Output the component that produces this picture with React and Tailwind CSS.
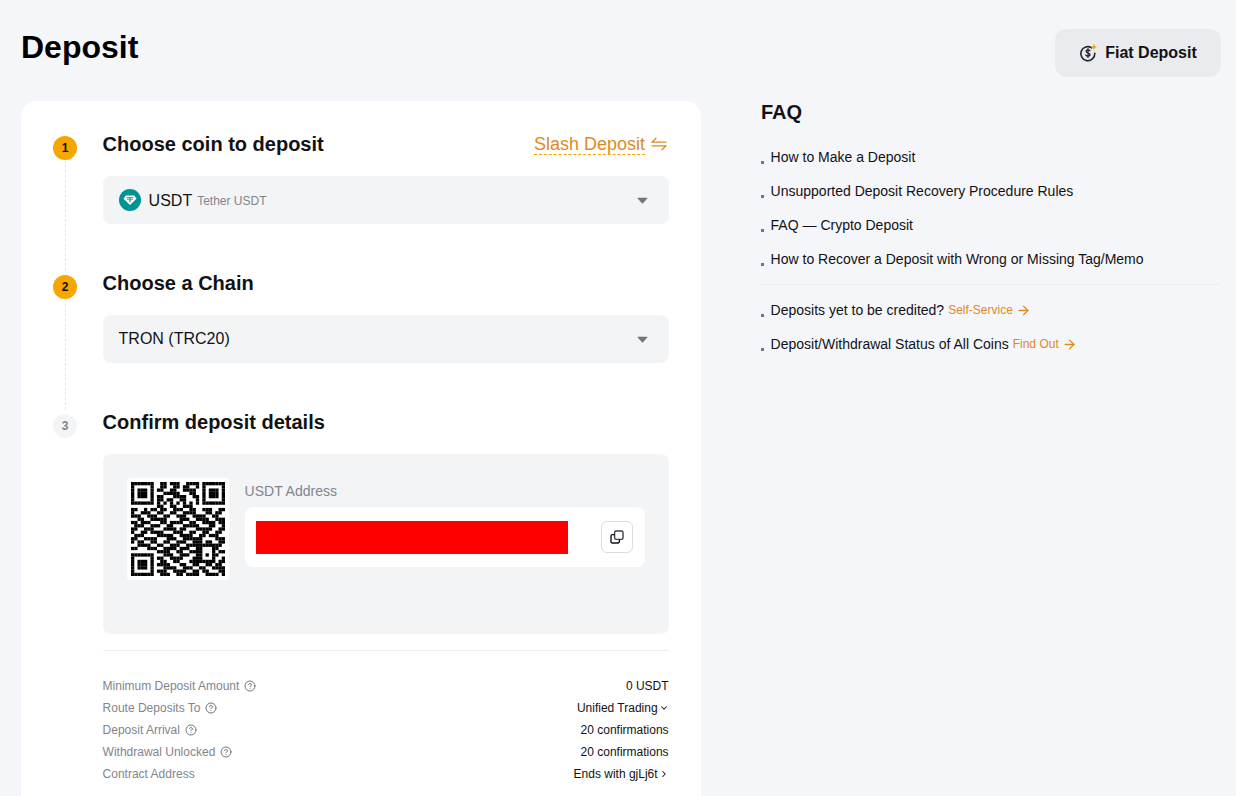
import { ChevronDown, ChevronRight, ArrowRight, CircleHelp } from "lucide-react";

const finder = ["1111111", "1000001", "1011101", "1011101", "1011101", "1000001", "1111111"];
const topMid = [
  "0110111001111",
  "0110011011001",
  "1100110011110",
  "0011111000110",
  "1100011110011",
  "1101100110001",
  "1010101010101",
];
const middle = [
  "00000000110011001110000000000",
  "11001011011001110011001110011",
  "10011100110011001111000110110",
  "11100111001100111001111001100",
  "00110011111000011100111100111",
  "11011100011011110011001111011",
  "01110011100110001111100011001",
  "11001110001111011000111110011",
  "10011011110001110011001100110",
  "01110000111110011110011011100",
  "11001111000111001111110000111",
  "10110011001100111001110110011",
  "00111100110011100111111111110",
  "11000111001111011100110001100",
  "00000000111100110011110001011",
];
const bottom = [
  "001110011100110101100",
  "110011110001110001001",
  "011001100011111111011",
  "111100011001100110110",
  "001111001110011001111",
  "111001111001101100011",
  "011100110111100111101",
];
const qrRows = [
  ...finder.map((f, i) => f + "0" + topMid[i] + "0" + f),
  ...middle,
  ...finder.map((f, i) => f + "0" + bottom[i]),
];

function QrCode() {
  return (
    <div className="w-[102px] h-[102px] shrink-0 bg-white rounded p-1 flex items-center justify-center">
      <svg width="94" height="94" viewBox="0 0 29 29">
        {qrRows.map((row, y) =>
          row.split("").map((c, x) =>
            c === "1" ? <rect key={x + "-" + y} x={x} y={y} width="1.02" height="1.02" fill="#000" /> : null
          )
        )}
      </svg>
    </div>
  );
}

function TetherIcon() {
  return (
    <svg width="22" height="22" viewBox="0 0 22 22" className="shrink-0">
      <circle cx="11" cy="11" r="11" fill="#009393" />
      <path d="M6.8 6.5h8.4l2.3 3.2-6.5 6.3-6.5-6.3z" fill="#fff" />
      <path d="M7.6 8.8h6.8M11 8.8v4.4" stroke="#009393" strokeWidth="1.1" fill="none" />
      <path d="M8 10.4c1.8.5 4.2.5 6 0" stroke="#009393" strokeWidth=".7" fill="none" />
    </svg>
  );
}

function FiatIcon() {
  return (
    <svg width="18" height="18" viewBox="0 0 18 18" fill="none" className="shrink-0">
      <path d="M12.6 3.8A7 7 0 1 0 15.8 9.4" stroke="#1f2329" strokeWidth="1.6" strokeLinecap="round" />
      <path d="M10.9 6.7c-.4-.6-1.1-.9-2-.9-1.1 0-1.9.6-1.9 1.5 0 2 4 1.1 4 3.2 0 .9-.9 1.6-2.1 1.6-.9 0-1.7-.4-2.1-1M9 4.6v8.8" stroke="#1f2329" strokeWidth="1.3" strokeLinecap="round" />
      <path d="M15 0l.9 2.1 2.1.9-2.1.9-.9 2.1-.9-2.1-2.1-.9 2.1-.9z" fill="#f7a600" />
    </svg>
  );
}

function Caret() {
  return (
    <svg width="11" height="7" viewBox="0 0 12 8" className="shrink-0 mr-[1px]">
      <path d="M1 .8h10a.6.6 0 0 1 .5 1L6.6 7.2a.8.8 0 0 1-1.2 0L.5 1.8A.6.6 0 0 1 1 .8z" fill="#71757f" />
    </svg>
  );
}

function SelectBox({ children }) {
  return (
    <div className="h-12 bg-[#f3f4f6] rounded-lg mt-5 pl-4 pr-[20px] flex items-center justify-between">
      <div className="flex items-center">{children}</div>
      <Caret />
    </div>
  );
}

function Step({ num, active, last, title, right, children, bodyClass }) {
  return (
    <div className="flex">
      <div className="w-6 mr-[25.6px] flex flex-col items-center shrink-0">
        <div
          className={
            "w-6 h-6 mt-1 rounded-full flex items-center justify-center text-xs font-bold shrink-0 " +
            (active ? "bg-[#f7a600] text-[#121214]" : "bg-[#f3f4f6] text-[#81858c]")
          }
        >
          {num}
        </div>
        {!last && <div className="flex-1 border-l border-dashed border-[#e5e7eb]" />}
      </div>
      <div className={"flex-1 min-w-0 " + (bodyClass || "")}>
        <div className="h-6 flex items-center justify-between">
          <h2 className="text-xl leading-6 font-bold text-[#121214]">{title}</h2>
          {right}
        </div>
        {children}
      </div>
    </div>
  );
}

function InfoRow({ label, help, children }) {
  return (
    <div className="h-[22px] flex items-center justify-between text-xs pr-[0.4px]">
      <div className="flex items-center text-[#81858c]">
        {label}
        {help && <CircleHelp size={12} strokeWidth={2} className="ml-[5px] text-[#71757f]" />}
      </div>
      <div className="flex items-center text-[#121214]">{children}</div>
    </div>
  );
}

function FaqItem({ children }) {
  return (
    <div className="h-[34px] flex items-center text-sm text-[#121214]">
      <span className="w-[3px] h-[3px] bg-[#71757f] mt-[10px] mr-[6.6px] shrink-0" />
      {children}
    </div>
  );
}

function OrangeLink({ children }) {
  return (
    <span className="ml-1 flex items-center text-xs text-[#e08a1c]">
      {children}
      <ArrowRight size={15} strokeWidth={2.2} className="ml-[3px]" />
    </span>
  );
}

export default function App() {
  return (
    <div className="h-[796px] overflow-hidden bg-[#f5f6fa] font-['Liberation_Sans',Arial,sans-serif] pl-[21px] pr-[15px]">
      <header className="flex justify-between items-start h-[101px]">
        <h1 className="text-[32px] leading-10 font-bold text-black mt-[27px]">Deposit</h1>
        <button className="mt-[29px] w-[166px] h-12 bg-[#e9ebef] rounded-xl flex items-center justify-center gap-2 text-base font-bold text-[#121214]">
          <FiatIcon />
          Fiat Deposit
        </button>
      </header>

      <div className="flex items-start">
        <main className="w-[680px] shrink-0 bg-white rounded-2xl pl-8 pr-8 pt-[31px] pb-10">
          <Step
            num="1"
            active
            title="Choose coin to deposit"
            bodyClass="pb-[47px]"
            right={
              <span className="flex items-center text-lg text-[#e08a1c] pr-[2px]">
                <span className="border-b border-dashed border-[#f7a600] leading-[20px] pt-px">Slash Deposit</span>
                <svg width="16" height="14" viewBox="0 0 16 14" fill="none" className="ml-[6px]">
                  <path d="M1 5.2h14M1 5.2 5 1.2M15 8.8H1M15 8.8l-4 4" stroke="#e08a1c" strokeWidth="1.3" strokeLinecap="round" />
                </svg>
              </span>
            }
          >
            <SelectBox>
              <TetherIcon />
              <span className="ml-2 text-base text-[#121214] pt-px">USDT</span>
              <span className="ml-[5px] text-xs text-[#81858c] pt-px">Tether USDT</span>
            </SelectBox>
          </Step>

          <Step num="2" active title="Choose a Chain" bodyClass="pb-[47px]">
            <SelectBox>
              <span className="text-base text-[#121214]">TRON (TRC20)</span>
            </SelectBox>
          </Step>

          <Step num="3" last title="Confirm deposit details">
            <div className="h-[180px] bg-[#f3f4f6] rounded-lg mt-5 pl-6 pr-6 pt-6 flex items-start">
              <QrCode />
              <div className="flex-1 ml-4">
                <div className="text-sm leading-[18px] text-[#81858c] mt-1">USDT Address</div>
                <div className="h-[60px] mt-[7px] bg-white rounded-lg pl-[11px] pr-3 flex items-center justify-between">
                  <div className="w-[312px] h-[33px] bg-[#ff0000]" />
                  <button className="w-8 h-8 bg-white border border-[#d9dce1] rounded-md flex items-center justify-center">
                    <svg width="14" height="14" viewBox="0 0 14 14" fill="none">
                      <rect x="4.6" y="1" width="8.4" height="8.4" rx="1.4" stroke="#3c4048" strokeWidth="1.4" />
                      <path d="M4.6 4.6H2.4A1.4 1.4 0 0 0 1 6v5.6A1.4 1.4 0 0 0 2.4 13H8a1.4 1.4 0 0 0 1.4-1.4V9.4" stroke="#121214" strokeWidth="1.4" />
                    </svg>
                  </button>
                </div>
              </div>
            </div>

            <div className="border-t border-[#eceef1] mt-4 pt-6">
              <InfoRow label="Minimum Deposit Amount" help>0 USDT</InfoRow>
              <InfoRow label="Route Deposits To" help>
                Unified Trading
                <ChevronDown size={10} strokeWidth={2.5} className="ml-px" />
              </InfoRow>
              <InfoRow label="Deposit Arrival" help>20 confirmations</InfoRow>
              <InfoRow label="Withdrawal Unlocked" help>20 confirmations</InfoRow>
              <InfoRow label="Contract Address">
                Ends with gjLj6t
                <ChevronRight size={10} strokeWidth={2.5} className="ml-px" />
              </InfoRow>
            </div>
          </Step>
        </main>

        <aside className="flex-1 ml-[60px] min-w-0 -mt-px">
          <h2 className="text-xl leading-6 font-bold text-[#121214]">FAQ</h2>
          <div className="mt-[16px]">
            <FaqItem>How to Make a Deposit</FaqItem>
            <FaqItem>Unsupported Deposit Recovery Procedure Rules</FaqItem>
            <FaqItem>FAQ — Crypto Deposit</FaqItem>
            <FaqItem>How to Recover a Deposit with Wrong or Missing Tag/Memo</FaqItem>
          </div>
          <div className="border-t border-[#eceef1] mt-2 pt-2">
            <FaqItem>
              Deposits yet to be credited?
              <OrangeLink>Self-Service</OrangeLink>
            </FaqItem>
            <FaqItem>
              Deposit/Withdrawal Status of All Coins
              <OrangeLink>Find Out</OrangeLink>
            </FaqItem>
          </div>
        </aside>
      </div>
    </div>
  );
}
